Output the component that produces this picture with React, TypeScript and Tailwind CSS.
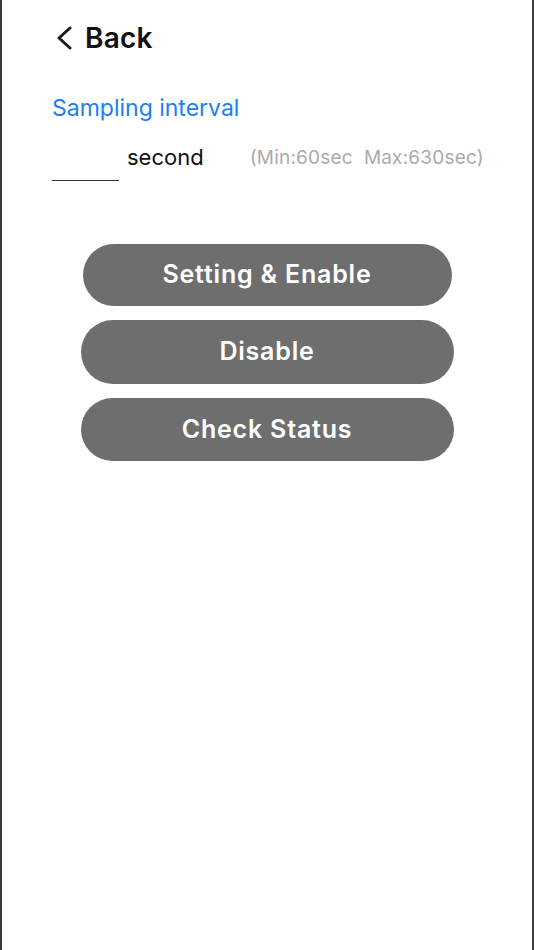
import React from "react";

export default function App() {
  const font = { fontFamily: "Inter, 'Noto Sans', sans-serif" };
  return (
    <div
      className="min-h-[950px] w-[534px] bg-white border-l-2 border-r-2 border-l-[#3a3a3a] border-r-[#3a3a3a] flex flex-col"
      style={font}
    >
      <div className="flex items-center pl-[53px] pt-[19px] h-[56px]">
        <svg width="20" height="24" viewBox="0 0 20 24" className="mr-[10px]">
          <path d="M15 2 L4 12 L15 22" fill="none" stroke="#1a1a1a" strokeWidth="3" strokeLinecap="round" strokeLinejoin="round" />
        </svg>
        <span className="text-[28px] font-semibold text-[#111] leading-none tracking-[0.2px]">Back</span>
      </div>

      <div className="pl-[50px] mt-[41px] text-[23px] text-[#1c7ef5] leading-none">Sampling interval</div>

      <div className="flex items-start pl-[50px] mt-[24px] h-[40px]">
        <div className="w-[67px] h-[37px] border-b border-[#333]"></div>
        <span className="ml-[8px] text-[22px] text-[#111] leading-none mt-[2px]">second</span>
        <span className="ml-[46px] text-[19px] text-[#aaaaaa] leading-none mt-[4px] whitespace-pre tracking-[0.2px]">(Min:60sec  Max:630sec)</span>
      </div>

      <div className="flex flex-col items-center mt-[60px] gap-[14px]">
        <button className="w-[369px] h-[62px] rounded-full bg-[#6e6e6e] text-white text-[25px] font-semibold tracking-[0.8px]">
          Setting &amp; Enable
        </button>
        <button className="w-[373px] h-[64px] rounded-full bg-[#6e6e6e] text-white text-[25px] font-semibold tracking-[0.8px]">
          Disable
        </button>
        <button className="w-[373px] h-[63px] rounded-full bg-[#6e6e6e] text-white text-[25px] font-semibold tracking-[0.8px]">
          Check Status
        </button>
      </div>
    </div>
  );
}
